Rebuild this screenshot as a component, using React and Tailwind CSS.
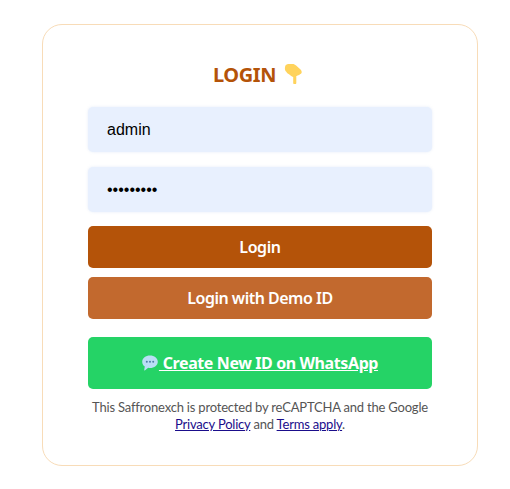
function PointingDown() {
  return (
    <svg width="18" height="20" viewBox="0 0 18 20" className="ml-[8px] shrink-0">
      <path
        d="M1.500 1.500C2.200.5 3.500 0 5 0h3.500c1.500 0 2.600.6 3.600 1.500l3.600 3.200c1.200 1 2 2.100 2 3.300 0 1.300-.8 2.200-1.800 2.300-.4.800-1.200 1.200-2 1-.4.500-1 .7-1.600.6v7c0 .9-.6 1.600-1.500 1.600s-1.600-.7-1.600-1.600v-5.900c-1.700-.6-3-1.600-4.200-2.800C3.800 9.900 2.800 9 2.300 7.800 1.400 6.900.8 5.600.9 4.400 1 3.300 1 2.300 1.500 1.500z"
        fill="#ffd35c"
      />
    </svg>
  )
}

function SpeechBubble() {
  return (
    <svg width="16" height="16" viewBox="0 0 16 16" className="mr-[1px] shrink-0">
      <path
        d="M8 .5c4.300 0 7.800 2.700 7.800 6.200S12.300 13 8 13c-.6 0-1.200-.1-1.800-.2L2.800 15.400c-.4.200-.7 0-.6-.4l.6-3.400C1.200 10.400.2 8.700.2 6.700.2 3.200 3.700.5 8 .5z"
        fill="#b9def5"
      />
      <circle cx="4.800" cy="6.700" r="1" fill="#4f7fa8" />
      <circle cx="8" cy="6.700" r="1" fill="#4f7fa8" />
      <circle cx="11.200" cy="6.700" r="1" fill="#4f7fa8" />
    </svg>
  )
}

export default function App() {
  return (
    <div className="min-h-[489px] bg-white pt-6 pl-[42px] font-['Noto_Sans','Open_Sans',sans-serif]">
      <div className="box-border h-[442px] w-[436px] rounded-[20px] border border-[#f8dcb8] px-[45px] pt-[32px]">
        <h2 className="flex h-[34px] items-center justify-center pr-[5px] text-[20px] font-bold tracking-[-0.4px] text-[#b45309]">
          <span className="pt-[2px]">LOGIN</span>
          <PointingDown />
        </h2>

        <div className="mt-[16px] flex flex-col gap-[15px]">
          <input
            readOnly
            value="admin"
            className="h-[45px] w-full rounded-[5px] bg-[#e8f0fe] px-[19px] pt-[1px] font-['Liberation_Sans',sans-serif] text-[16px] text-black shadow-[0_0_3px_rgba(180,200,235,0.35)] outline-none"
          />
          <input
            readOnly
            type="password"
            value="password1"
            className="h-[45px] w-full rounded-[5px] bg-[#e8f0fe] px-[19px] font-['Liberation_Sans',sans-serif] text-[16px] text-black shadow-[0_0_3px_rgba(180,200,235,0.35)] outline-none"
          />
        </div>

        <button className="mt-[14px] block h-[42px] w-full rounded-[5px] bg-[#b45309] text-[16px] font-semibold tracking-[-0.4px] text-white">
          Login
        </button>
        <button className="mt-[9px] block h-[42px] w-full rounded-[5px] bg-[#c2692e] text-[16px] font-semibold tracking-[-0.5px] text-white">
          Login with Demo ID
        </button>

        <a
          href="#"
          className="mt-[18px] flex h-[52px] w-full items-center justify-center rounded-[5px] bg-[#25d366] text-[16px] font-bold tracking-[-0.4px] text-white underline"
        >
          <SpeechBubble />
          <span className="whitespace-pre"> Create New ID on WhatsApp</span>
        </a>

        <p className="mt-[10px] text-center font-['Lato',sans-serif] text-[13px] leading-[17px] tracking-[-0.2px] text-[#555555]">
          This Saffronexch is protected by reCAPTCHA and the Google{' '}
          <a href="#" className="text-[#1a0d8b] underline">
            Privacy Policy
          </a>{' '}
          and{' '}
          <a href="#" className="text-[#1a0d8b] underline">
            Terms apply
          </a>
          .
        </p>
      </div>
    </div>
  )
}
